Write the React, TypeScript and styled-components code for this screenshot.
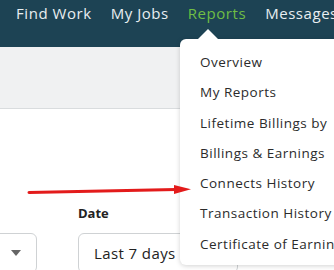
import styled, { createGlobalStyle } from "styled-components";

const GlobalStyle = createGlobalStyle`
  html, body {
    margin: 0;
    padding: 0;
    background: #ffffff;
    overflow: hidden;
  }
  body {
    font-family: "Open Sans", "Liberation Sans", sans-serif;
  }
`;

const Page = styled.div`
  position: relative;
  width: 334px;
  height: 270px;
  overflow: hidden;
  background: #ffffff;
`;

const NavBar = styled.nav`
  height: 47px;
  background: #1d4354;
  display: flex;
  align-items: flex-start;
  gap: 19px;
  padding: 3px 0 0 16px;
  box-sizing: border-box;
  white-space: nowrap;
`;

const NavItem = styled.a<{ active?: boolean }>`
  font-size: 15px;
  line-height: 20px;
  letter-spacing: 0.55px;
  color: ${(p) => (p.active ? "#6fbe44" : "#e8eef1")};
  text-decoration: none;
`;

const SubHeader = styled.div`
  height: 61px;
  background: #f0f1f2;
  border-bottom: 1px solid #d9dcde;
`;

const Filters = styled.div`
  display: flex;
  gap: 41px;
  padding-top: 97px;
`;

const Field = styled.div`
  display: flex;
  flex-direction: column;
  gap: 13px;
`;

const Label = styled.div`
  font-size: 13px;
  font-weight: 700;
  line-height: 14px;
  height: 14px;
  color: #222222;
`;

const Select = styled.div<{ offset?: number }>`
  width: 160px;
  height: 40px;
  margin-left: ${(p) => p.offset ?? 0}px;
  box-sizing: border-box;
  border: 1px solid #cfd2d4;
  border-radius: 6px;
  display: flex;
  align-items: center;
  padding: 0 15px;
  font-size: 15px;
  letter-spacing: 0.4px;
  color: #222222;
`;

const Caret = styled.span`
  margin-left: auto;
  width: 0;
  height: 0;
  border-left: 5px solid transparent;
  border-right: 5px solid transparent;
  border-top: 6px solid #656565;
`;

const Menu = styled.ul`
  position: absolute;
  left: 180px;
  top: 39px;
  width: 172px;
  height: 226px;
  margin: 0;
  padding: 8px 0 0 20px;
  box-sizing: border-box;
  list-style: none;
  background: #ffffff;
  border-radius: 6px;
  box-shadow: 0 1px 5px rgba(0, 0, 0, 0.18);

  &::before {
    content: "";
    position: absolute;
    left: 18px;
    top: -10px;
    border-left: 10px solid transparent;
    border-right: 10px solid transparent;
    border-bottom: 10px solid #ffffff;
  }
`;

const MenuItem = styled.li`
  height: 30.3px;
  line-height: 30px;
  font-size: 13.5px;
  letter-spacing: 0.5px;
  color: #2b2b2b;
  white-space: nowrap;
`;

const Annotation = styled.svg`
  position: absolute;
  left: 26px;
  top: 182px;
`;

const items = [
  "Overview",
  "My Reports",
  "Lifetime Billings by",
  "Billings & Earnings",
  "Connects History",
  "Transaction History",
  "Certificate of Earnings",
];

export default function App() {
  return (
    <Page>
      <GlobalStyle />
      <NavBar>
        <NavItem>Find Work</NavItem>
        <NavItem>My Jobs</NavItem>
        <NavItem active>Reports</NavItem>
        <NavItem>Messages</NavItem>
      </NavBar>
      <SubHeader />
      <Filters>
        <Field>
          <Label />
          <Select offset={-123}>
            <Caret />
          </Select>
        </Field>
        <Field>
          <Label>Date</Label>
          <Select>Last 7 days</Select>
        </Field>
      </Filters>
      <Menu>
        {items.map((item) => (
          <MenuItem key={item}>{item}</MenuItem>
        ))}
      </Menu>
      <Annotation width="170" height="16" viewBox="0 0 170 16">
        <path d="M3 10.5 L150 7.5" stroke="#e31b1b" strokeWidth="3" strokeLinecap="round" fill="none" />
        <polygon points="148,3 165,7.3 148,12" fill="#e31b1b" />
      </Annotation>
    </Page>
  );
}
